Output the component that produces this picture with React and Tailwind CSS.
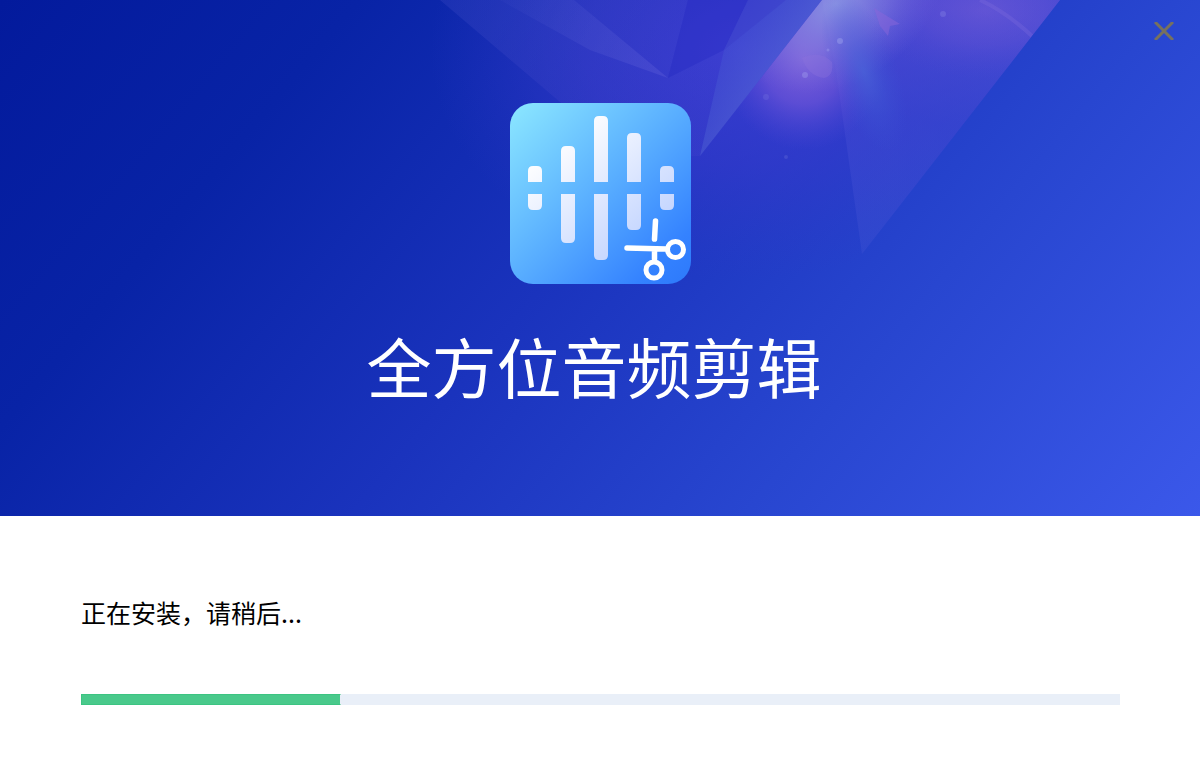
const STATUS_TEXT = "正在安装，请稍后...";
const PROGRESS = 25;

// Bars of the app icon: x, top of the upper half, bottom of the lower half
const BARS = [
  { x: 18, top: 63, bottom: 107 },
  { x: 51, top: 43, bottom: 140 },
  { x: 84, top: 13, bottom: 157 },
  { x: 117, top: 30, bottom: 127 },
  { x: 150, top: 63, bottom: 107 },
];

const STARS = [
  { x: 840, y: 41, r: 3, opacity: 0.35 },
  { x: 805, y: 75, r: 3, opacity: 0.3 },
  { x: 943, y: 14, r: 3, opacity: 0.2 },
  { x: 828, y: 50, r: 1.5, opacity: 0.3 },
  { x: 786, y: 157, r: 2, opacity: 0.15 },
  { x: 766, y: 97, r: 3, opacity: 0.12 },
];

function HeroBackground() {
  return (
    <svg
      className="absolute inset-0 w-full h-full"
      viewBox="0 0 1200 516"
      preserveAspectRatio="xMidYMin slice"
      aria-hidden="true"
    >
      <defs>
        <radialGradient id="violet" gradientUnits="userSpaceOnUse" cx="0" cy="0" r="1" gradientTransform="translate(740 50) scale(310 230)">
          <stop offset="0" stopColor="#4440d8" stopOpacity="0.75" />
          <stop offset="0.5" stopColor="#3e3ad0" stopOpacity="0.48" />
          <stop offset="1" stopColor="#3438c8" stopOpacity="0" />
        </radialGradient>
        <radialGradient id="pink">
          <stop offset="0" stopColor="#9068dc" stopOpacity="0.85" />
          <stop offset="0.5" stopColor="#7859da" stopOpacity="0.6" />
          <stop offset="1" stopColor="#5448d6" stopOpacity="0" />
        </radialGradient>
        <radialGradient id="haze">
          <stop offset="0" stopColor="#96a0e6" stopOpacity="0.85" />
          <stop offset="0.5" stopColor="#8680e0" stopOpacity="0.6" />
          <stop offset="1" stopColor="#7068dc" stopOpacity="0" />
        </radialGradient>
        <radialGradient id="cyan">
          <stop offset="0" stopColor="#4664d8" stopOpacity="0.7" />
          <stop offset="1" stopColor="#3a50d4" stopOpacity="0" />
        </radialGradient>
        <linearGradient id="shardWide" gradientUnits="userSpaceOnUse" x1="520" y1="0" x2="640" y2="120">
          <stop offset="0" stopColor="#4650c8" stopOpacity="0.25" />
          <stop offset="1" stopColor="#5048d0" stopOpacity="0.16" />
        </linearGradient>
        <linearGradient id="shardLeft" gradientUnits="userSpaceOnUse" x1="500" y1="0" x2="668" y2="78">
          <stop offset="0" stopColor="#5560d0" stopOpacity="0.06" />
          <stop offset="1" stopColor="#5c5cd8" stopOpacity="0.4" />
        </linearGradient>
        <linearGradient id="shardMid" gradientUnits="userSpaceOnUse" x1="735" y1="20" x2="790" y2="50">
          <stop offset="0" stopColor="#5060d4" stopOpacity="0.3" />
          <stop offset="1" stopColor="#5a6ad8" stopOpacity="0.6" />
        </linearGradient>
        <linearGradient id="shardRight" gradientUnits="userSpaceOnUse" x1="900" y1="0" x2="862" y2="254">
          <stop offset="0" stopColor="#5c50d6" stopOpacity="0.65" />
          <stop offset="0.45" stopColor="#4248d2" stopOpacity="0.5" />
          <stop offset="1" stopColor="#4456d4" stopOpacity="0.3" />
        </linearGradient>
        <clipPath id="beam">
          <path d="M822 0H1060L862 254 836 160 700 156Z" />
        </clipPath>
        <clipPath id="leftOfEdge">
          <path d="M0 0H1060L862 254 660 516H0Z" />
        </clipPath>
      </defs>

      <rect width="1200" height="516" fill="url(#violet)" clipPath="url(#leftOfEdge)" />

      {/* Shards */}
      <path d="M440 0H688L668 78 724 50 700 156H640L560 102Z" fill="url(#shardWide)" />
      <path d="M500 0H574L668 78 590 50Z" fill="url(#shardLeft)" />
      <path d="M688 0H748L724 50 668 78Z" fill="#2a2cc4" opacity="0.35" />
      <path d="M748 0H822L700 156 724 50Z" fill="url(#shardMid)" />
      <path d="M748 0H786L724 50Z" fill="#3a3cca" opacity="0.45" />
      <path d="M836 70L822 0H1060L862 254Z" fill="url(#shardRight)" />

      {/* Nebula */}
      <g clipPath="url(#beam)">
        <ellipse cx="804" cy="58" rx="84" ry="92" fill="url(#pink)" />
        <ellipse cx="836" cy="4" rx="112" ry="80" fill="url(#haze)" transform="rotate(-30 836 4)" />
        <ellipse cx="985" cy="10" rx="120" ry="70" fill="url(#pink)" opacity="0.4" />
        <ellipse cx="864" cy="72" rx="34" ry="84" fill="url(#cyan)" transform="rotate(-20 864 72)" />
        <path d="M802 58q18-8 30 4q2 14-8 16q-16-2-22-20Z" fill="#8c72de" opacity="0.35" />
        <path d="M874 8L900 24 890 26 888 36 880 26Z" fill="#8a66da" opacity="0.5" />
        <path d="M980 0Q1006 12 1032 36" fill="none" stroke="#8874e0" strokeWidth="4" opacity="0.25" />
      </g>

      {STARS.map((star) => (
        <circle
          key={`${star.x}-${star.y}`}
          cx={star.x}
          cy={star.y}
          r={star.r}
          fill="#b0b4f4"
          opacity={star.opacity}
        />
      ))}
    </svg>
  );
}

function AppLogo() {
  return (
    <svg className="relative w-[181px] h-[181px]" viewBox="0 0 181 181" role="img" aria-label="全方位音频剪辑">
      <defs>
        <linearGradient id="tile" x1="0" y1="0" x2="1" y2="1">
          <stop offset="0" stopColor="#8ce8ff" />
          <stop offset="0.5" stopColor="#58adff" />
          <stop offset="0.85" stopColor="#3482ff" />
          <stop offset="1" stopColor="#2d79fb" />
        </linearGradient>
        <linearGradient id="bars" gradientUnits="userSpaceOnUse" x1="45" y1="35" x2="135" y2="140">
          <stop offset="0" stopColor="#ffffff" />
          <stop offset="1" stopColor="#c2d4ff" />
        </linearGradient>
      </defs>
      <rect width="181" height="181" rx="23" fill="url(#tile)" />
      <g fill="url(#bars)">
        {BARS.map(({ x, top, bottom }) => (
          <g key={x}>
            <path d={`M${x} 79V${top + 5}q0-5 5-5h4q5 0 5 5V79z`} />
            <path d={`M${x} 91V${bottom - 5}q0 5 5 5h4q5 0 5-5V91z`} />
          </g>
        ))}
      </g>

      {/* Scissors */}
      <g fill="none" stroke="#ffffff" strokeWidth="5.5" strokeLinecap="round">
        <path d="M145.5 118L144.500 136M117 145L156 146M144.500 147V156" />
        <circle cx="165.500" cy="146.500" r="8" strokeWidth="5" />
        <circle cx="144" cy="167" r="8" strokeWidth="5" />
      </g>
    </svg>
  );
}

export default function App() {
  return (
    <div className="min-h-screen flex flex-col bg-white font-['Noto_Sans_CJK_SC',sans-serif]">
      {/* Hero */}
      <header className="relative overflow-hidden flex flex-col items-center pt-[103px] pb-[102px] bg-[linear-gradient(130deg,#031a9c,#0823a6_22%,#1a33bd_48%,#2846d0_72%,#3b58ea)]">
        <HeroBackground />
        <button
          type="button"
          aria-label="关闭"
          className="absolute top-[17px] right-5 w-8 h-7 flex items-center justify-center text-[#77715e] hover:text-white cursor-pointer"
        >
          <svg className="w-5 h-[18px]" viewBox="0 0 20 18" fill="none" stroke="currentColor" strokeWidth="3">
            <path d="M1 0L19 18M19 0L1 18" />
          </svg>
        </button>
        <AppLogo />
        <h1 className="relative mt-8 pr-3 text-[65px] leading-[98px] font-normal text-white">
          全方位音频剪辑
        </h1>
      </header>

      {/* Progress */}
      <main className="pl-[81px] pr-20 pt-[78px]">
        <p id="status" className="text-[25px] leading-9 text-black">
          {STATUS_TEXT}
        </p>
        <div
          role="progressbar"
          aria-labelledby="status"
          aria-valuenow={PROGRESS}
          aria-valuemin={0}
          aria-valuemax={100}
          className="mt-16 h-[11px] bg-[#e9eff8]"
        >
          <div
            className="h-full bg-[#49c98b] border border-[#3cc482] border-r-[#e9eff8]"
            style={{ width: `${PROGRESS}%` }}
          />
        </div>
      </main>
    </div>
  );
}
